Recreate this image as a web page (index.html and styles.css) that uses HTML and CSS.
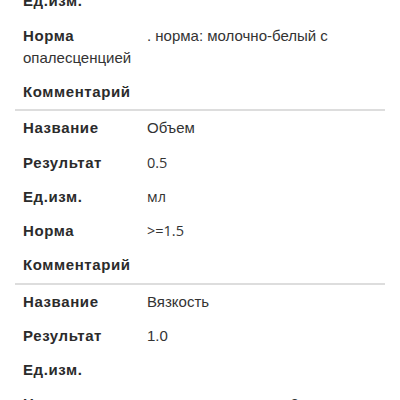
FILE: index.html
```html
<!DOCTYPE html>
<html lang="ru">
<head>
<meta charset="utf-8">
<link rel="stylesheet" href="styles.css">
</head>
<body>
<div class="list">
  <div class="block">
    <p class="row"><span class="label">Ед.изм.</span></p>
    <p class="row"><span class="label">Норма</span><span class="value">. норма: молочно-белый с опалесценцией</span></p>
    <p class="row"><span class="label">Комментарий</span></p>
  </div>
  <div class="block">
    <p class="row"><span class="label">Название</span><span class="value">Объем</span></p>
    <p class="row"><span class="label">Результат</span><span class="value alt">0.5</span></p>
    <p class="row"><span class="label">Ед.изм.</span><span class="value alt">мл</span></p>
    <p class="row"><span class="label">Норма</span><span class="value alt">&gt;=1.5</span></p>
    <p class="row"><span class="label">Комментарий</span></p>
  </div>
  <div class="block">
    <p class="row"><span class="label">Название</span><span class="value">Вязкость</span></p>
    <p class="row"><span class="label">Результат</span><span class="value">1.0</span></p>
    <p class="row"><span class="label">Ед.изм.</span></p>
    <p class="row"><span class="label">Норма</span><span class="value">. норма: нить менее 2 см</span></p>
    <p class="row"><span class="label">Комментарий</span></p>
  </div>
</div>
</body>
</html>
```
FILE: styles.css
```css
html, body {
  margin: 0;
  padding: 0;
  background: #ffffff;
}
body {
  font-family: "Liberation Sans", Arial, sans-serif;
  font-size: 15px;
  color: #333333;
  overflow: hidden;
}
.list {
  margin-top: -15.75px;
  padding: 0 15px;
}
.block {
  border-bottom: 2px solid #dddddd;
}
.row {
  margin: 0;
  padding: 6.15px 8px;
  line-height: 22px;
}
.label {
  display: inline-block;
  width: 124px;
  font-weight: bold;
  letter-spacing: 0.6px;
  color: #2b2b2b;
}
.value {
  color: #333333;
}
.value.alt {
  font-family: "Open Sans", sans-serif;
  font-size: 14.5px;
}
```
